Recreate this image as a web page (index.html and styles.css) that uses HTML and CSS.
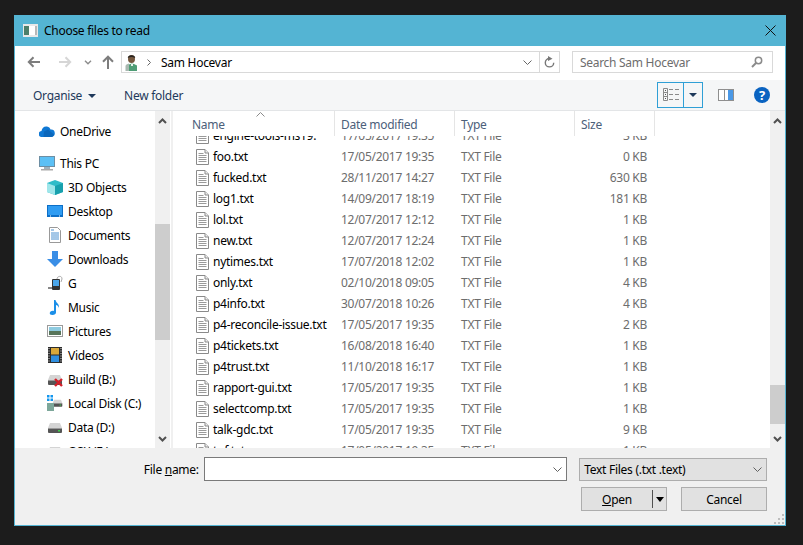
FILE: index.html
```html
<!DOCTYPE html>
<html lang="en">
<head>
<meta charset="utf-8">
<title>Choose files to read</title>
<link rel="stylesheet" href="styles.css">
</head>
<body>
<svg class="defs" width="0" height="0" aria-hidden="true">
  <defs>
    <symbol id="file" viewBox="0 0 13 16">
      <path d="M.5.500h8.500l3.500 3.500v11.500h-12z" fill="#fff" stroke="#8a8a8a"/>
      <path d="M9 .5v3.500h3.500" fill="#eee" stroke="#8a8a8a"/>
      <path d="M2.500 4.500h5M2.500 6.500h8M2.500 8.500h8M2.500 10.500h8M2.500 12.500h8" stroke="#9a9a9a"/>
    </symbol>
    <symbol id="drive" viewBox="0 0 16 16">
      <path d="M3 4h10l2 5H1z" fill="#d4d4d4"/>
      <rect x="1" y="9" width="14" height="5" rx="1" fill="#555"/>
      <rect x="1" y="9" width="14" height="1" fill="#999"/>
      <rect x="11" y="11" width="2" height="1.500" fill="#3fd04a"/>
    </symbol>
  </defs>
</svg>
<div class="window">
  <header class="titlebar">
    <svg class="title-icon" width="15" height="13" viewBox="0 0 15 13"><rect width="15" height="13" fill="#e8e8e8"/><rect x="1" y="2" width="5" height="9" fill="#4d7f6a"/><rect x="6" y="2" width="6" height="9" fill="#fff"/><rect x="12" y="2" width="2" height="9" fill="#b8b8b8"/></svg>
    <span class="title-text">Choose files to read</span>
    <svg class="close" width="11" height="11" viewBox="0 0 11 11"><path d="M.5.500l10 10M10.500.500l-10 10" stroke="#111" fill="none"/></svg>
  </header>

  <div class="navbar">
    <svg class="nav-back" width="14" height="12" viewBox="0 0 14 12"><path d="M13 6H2M6.500 1.200L1.800 6l4.700 4.800" fill="none" stroke="#7d7d7d" stroke-width="2"/></svg>
    <svg class="nav-forward" width="14" height="12" viewBox="0 0 14 12"><path d="M1 6h11M7.500 1.200L12.200 6l-4.700 4.800" fill="none" stroke="#d6d6d6" stroke-width="2"/></svg>
    <svg class="nav-recent" width="8" height="5" viewBox="0 0 8 5"><path d="M1 .8l3 3 3-3" fill="none" stroke="#8c8c8c" stroke-width="1.400"/></svg>
    <svg class="nav-up" width="12" height="14" viewBox="0 0 12 14"><path d="M6 14V2M1 6.700L6 1.700l5 5" fill="none" stroke="#7d7d7d" stroke-width="2"/></svg>
    <div class="address">
      <svg class="user-icon" width="13" height="17" viewBox="0 0 13 17"><path d="M4 17V10.500l2.500-1 2.500 .5 3 1.500V17z" fill="#4f9d76"/><path d="M.5 17v-5c0-1.200 1.500-2 3.500-2.500V17z" fill="#a8b8b0"/><rect x="6" y="10" width="2" height="2" fill="#e8f2ec"/><ellipse cx="6.500" cy="5" rx="3.500" ry="4" fill="#75583f"/><path d="M2.800 4C2.500 .4 10.500 .4 10.200 4 7.500 2.800 5.500 2.800 2.800 4z" fill="#27231f"/></svg>
      <svg class="crumb" width="4" height="7" viewBox="0 0 4 7"><path d="M.5.500l3 3-3 3" fill="none" stroke="#666"/></svg>
      <span class="address-text">Sam Hocevar</span>
      <svg class="address-chevron" width="9" height="5" viewBox="0 0 9 5"><path d="M.5.500l4 4 4-4" fill="none" stroke="#666"/></svg>
      <span class="refresh">
        <svg width="11" height="12" viewBox="0 0 11 12"><path d="M5.500 2.500a4.200 4.200 0 1 0 4.200 4.200" fill="none" stroke="#777" stroke-width="1.400"/><path d="M4 0l4.500 2.800L4 5z" fill="#777"/></svg>
      </span>
    </div>
    <div class="search">
      <span>Search Sam Hocevar</span>
      <svg width="12" height="12" viewBox="0 0 12 12"><circle cx="7.500" cy="4.500" r="3.200" fill="none" stroke="#8a8a8a" stroke-width="1.500"/><path d="M5 7l-4 4" stroke="#8a8a8a" stroke-width="2"/></svg>
    </div>
  </div>

  <div class="toolbar">
    <span class="tool organise">Organise<i class="tool-caret"></i></span>
    <span class="tool">New folder</span>
    <span class="toolbar-spacer"></span>
    <div class="view-button">
      <span class="view-main">
        <svg width="16" height="13" viewBox="0 0 16 13"><path d="M.5.500h4v12h-4zM.5 4.500h4M.5 8.500h4" fill="none" stroke="#8a8a8a"/><path d="M6 1.500h4M12 1.500h4M6 6.500h4M12 6.500h4M6 11.500h4M12 11.500h4" stroke="#8a8a8a"/><path d="M2 2h1v1H2zM2 6h1v1H2zM2 10h1v1H2z" fill="#555"/></svg>
      </span>
      <span class="view-drop"><i class="tool-caret"></i></span>
    </div>
    <svg class="pane-icon" width="16" height="12" viewBox="0 0 16 12"><rect width="16" height="12" fill="#8f8f8f"/><rect x="1" y="1" width="5" height="10" fill="#fff"/><rect x="7" y="1" width="3" height="10" fill="#fff"/><rect x="10" y="1" width="5" height="10" fill="#4a98e6"/></svg>
    <svg class="help-icon" width="16" height="16" viewBox="0 0 16 16"><circle cx="8" cy="8" r="8" fill="#0a63c1"/><text x="8" y="12.500" class="help-mark">?</text></svg>
  </div>

  <div class="content">
    <nav class="sidebar">
      <div class="side-inner">
        <div class="side-row side-root side-gap">
          <svg width="16" height="11" viewBox="0 0 16 11"><path d="M3 11a3 3 0 0 1-.5-6C3 2 5 0 8 .5c2 .3 3 1.500 3.500 3a3.700 3.700 0 0 1 1 7.500z" fill="#0f78d4"/><path d="M5 5.500l4-2 6 5-1.500 2.500h-9z" fill="#0a5fb0" opacity=".7"/></svg>
          <span>OneDrive</span>
        </div>
        <div class="side-row side-root">
          <svg width="16" height="15" viewBox="0 0 16 15"><rect x=".5" y=".5" width="15" height="10" fill="#5cc0f5" stroke="#6d8ea3"/><rect x="5" y="11" width="6" height="2" fill="#9fb2bd"/><rect x="2" y="13" width="12" height="1.500" fill="#a9a9a9"/></svg>
          <span>This PC</span>
        </div>
        <div class="side-row">
          <svg width="16" height="15" viewBox="0 0 16 15"><path d="M8 0l8 3v9l-8 3-8-3V3z" fill="#2fbcc9"/><path d="M0 3l8 3v9l-8-3z" fill="#9fe6ea"/><path d="M8 6l8-3v9l-8 3z" fill="#18a0ad"/></svg>
          <span>3D Objects</span>
        </div>
        <div class="side-row">
          <svg width="16" height="12" viewBox="0 0 16 12"><rect width="16" height="12" fill="#0d6fc7"/><rect x="1" y="1" width="14" height="9" fill="#2f9cf2"/><path d="M3 11h1M12 11h1" stroke="#fff"/></svg>
          <span>Desktop</span>
        </div>
        <div class="side-row">
          <svg width="16" height="16" viewBox="0 0 12 16"><path d="M.5.500h8l3 3v12H.5z" fill="#fff" stroke="#999"/><path d="M2 3h3M2 6h8M2 8h8M2 10h8M2 12h8" stroke="#4a90d0"/></svg>
          <span>Documents</span>
        </div>
        <div class="side-row">
          <svg width="16" height="16" viewBox="0 0 16 16"><path d="M5 0h6v8h5l-8 8-8-8h5z" fill="#3a8ee6"/></svg>
          <span>Downloads</span>
        </div>
        <div class="side-row">
          <svg width="16" height="16" viewBox="0 0 16 16"><rect x="5" y="4" width="8" height="11" rx="1" fill="#333"/><rect x="6" y="5" width="6" height="6" fill="#4aa6ea"/><path d="M10 4c0-3 5-4 5 0l-1 3" fill="none" stroke="#aaa"/><rect x="1" y="12" width="4" height="2" fill="#888"/></svg>
          <span>G</span>
        </div>
        <div class="side-row">
          <svg width="16" height="16" viewBox="0 0 16 16"><path d="M7 1h1.500c.5 3 4 3.500 3.500 8-.5-2-2-3-3-3v7.500C9 15 7.500 16 5.500 16 3.500 16 2.500 15 2.800 13.700 3.200 12 5.500 11.300 7 12z" fill="#1b8fe8"/></svg>
          <span>Music</span>
        </div>
        <div class="side-row">
          <svg width="16" height="12" viewBox="0 0 16 12"><rect x=".5" y=".5" width="15" height="11" fill="#fff" stroke="#9a9a9a"/><rect x="2" y="2" width="12" height="4" fill="#8ecbe0"/><rect x="2" y="6" width="12" height="4" fill="#58755a"/></svg>
          <span>Pictures</span>
        </div>
        <div class="side-row">
          <svg width="16" height="16" viewBox="0 0 14 16"><rect width="14" height="16" fill="#2c2c2c"/><rect x="3" y="1" width="8" height="6.500" fill="#d9a83a"/><rect x="3" y="8.500" width="8" height="6.500" fill="#2f8fe0"/><path d="M1 1v14M13 1v14" stroke="#ddd" stroke-dasharray="1 1.500"/></svg>
          <span>Videos</span>
        </div>
        <div class="side-row">
          <svg width="16" height="16" viewBox="0 0 16 16"><use href="#drive" width="16" height="16"/><path d="M8 8l7 7M15 8l-7 7" stroke="#d3202a" stroke-width="2.400"/></svg>
          <span>Build (B:)</span>
        </div>
        <div class="side-row">
          <svg width="16" height="16" viewBox="0 0 16 16"><use href="#drive" x="5" y="2" width="11" height="11"/><path d="M0 0h2.500v2.500H0zM3.500 0H6v2.500H3.500zM0 3.500h2.500V6H0zM3.500 3.500H6V6H3.500z" fill="#1296ee"/><rect y="8" width="7" height="8" fill="#7da79a"/></svg>
          <span>Local Disk (C:)</span>
        </div>
        <div class="side-row">
          <svg width="16" height="16" viewBox="0 0 16 16"><use href="#drive" width="16" height="16"/></svg>
          <span>Data (D:)</span>
        </div>
        <div class="side-row">
          <svg width="16" height="16" viewBox="0 0 16 16"><use href="#drive" width="16" height="16"/></svg>
          <span>OSX (E:)</span>
        </div>
      </div>
    </nav>
    <div class="scrollbar scrollbar-side">
      <svg class="sb-arrow" width="9" height="6" viewBox="0 0 9 6"><path d="M1 5l3.500-3.500L8 5" fill="none" stroke="#505050" stroke-width="2"/></svg>
      <div class="sb-thumb"></div>
      <svg class="sb-arrow" width="9" height="6" viewBox="0 0 9 6"><path d="M1 1l3.500 3.500L8 1" fill="none" stroke="#505050" stroke-width="2"/></svg>
    </div>
    <div class="pane-divider"></div>

    <main class="files">
      <div class="file-header">
        <span class="col-head col-name">Name<svg class="sort-arrow" width="9" height="5" viewBox="0 0 9 5"><path d="M.5 4.500l4-4 4 4" fill="none" stroke="#8a8a8a"/></svg></span>
        <span class="col-head col-wide">Date modified</span>
        <span class="col-head col-wide">Type</span>
        <span class="col-head col-size">Size</span>
      </div>
      <div class="file-body">
        <div class="file-rows">
          <div class="row"><span class="name"><svg width="13" height="16"><use href="#file" width="13" height="16"/></svg>engine-tools-ms19.</span><span>17/05/2017 19:35</span><span>TXT File</span><span class="size">3 KB</span></div>
          <div class="row"><span class="name"><svg width="13" height="16"><use href="#file" width="13" height="16"/></svg>foo.txt</span><span>17/05/2017 19:35</span><span>TXT File</span><span class="size">0 KB</span></div>
          <div class="row"><span class="name"><svg width="13" height="16"><use href="#file" width="13" height="16"/></svg>fucked.txt</span><span>28/11/2017 14:27</span><span>TXT File</span><span class="size">630 KB</span></div>
          <div class="row"><span class="name"><svg width="13" height="16"><use href="#file" width="13" height="16"/></svg>log1.txt</span><span>14/09/2017 18:19</span><span>TXT File</span><span class="size">181 KB</span></div>
          <div class="row"><span class="name"><svg width="13" height="16"><use href="#file" width="13" height="16"/></svg>lol.txt</span><span>12/07/2017 12:12</span><span>TXT File</span><span class="size">1 KB</span></div>
          <div class="row"><span class="name"><svg width="13" height="16"><use href="#file" width="13" height="16"/></svg>new.txt</span><span>12/07/2017 12:24</span><span>TXT File</span><span class="size">1 KB</span></div>
          <div class="row"><span class="name"><svg width="13" height="16"><use href="#file" width="13" height="16"/></svg>nytimes.txt</span><span>17/07/2018 12:02</span><span>TXT File</span><span class="size">1 KB</span></div>
          <div class="row"><span class="name"><svg width="13" height="16"><use href="#file" width="13" height="16"/></svg>only.txt</span><span>02/10/2018 09:05</span><span>TXT File</span><span class="size">4 KB</span></div>
          <div class="row"><span class="name"><svg width="13" height="16"><use href="#file" width="13" height="16"/></svg>p4info.txt</span><span>30/07/2018 10:26</span><span>TXT File</span><span class="size">4 KB</span></div>
          <div class="row"><span class="name"><svg width="13" height="16"><use href="#file" width="13" height="16"/></svg>p4-reconcile-issue.txt</span><span>17/05/2017 19:35</span><span>TXT File</span><span class="size">2 KB</span></div>
          <div class="row"><span class="name"><svg width="13" height="16"><use href="#file" width="13" height="16"/></svg>p4tickets.txt</span><span>16/08/2018 16:40</span><span>TXT File</span><span class="size">1 KB</span></div>
          <div class="row"><span class="name"><svg width="13" height="16"><use href="#file" width="13" height="16"/></svg>p4trust.txt</span><span>11/10/2018 16:17</span><span>TXT File</span><span class="size">1 KB</span></div>
          <div class="row"><span class="name"><svg width="13" height="16"><use href="#file" width="13" height="16"/></svg>rapport-gui.txt</span><span>17/05/2017 19:35</span><span>TXT File</span><span class="size">1 KB</span></div>
          <div class="row"><span class="name"><svg width="13" height="16"><use href="#file" width="13" height="16"/></svg>selectcomp.txt</span><span>17/05/2017 19:35</span><span>TXT File</span><span class="size">1 KB</span></div>
          <div class="row"><span class="name"><svg width="13" height="16"><use href="#file" width="13" height="16"/></svg>talk-gdc.txt</span><span>17/05/2017 19:35</span><span>TXT File</span><span class="size">9 KB</span></div>
          <div class="row"><span class="name"><svg width="13" height="16"><use href="#file" width="13" height="16"/></svg>tgf.txt</span><span>17/05/2017 19:35</span><span>TXT File</span><span class="size">1 KB</span></div>
        </div>
      </div>
    </main>
    <div class="scrollbar scrollbar-files">
      <svg class="sb-arrow" width="9" height="6" viewBox="0 0 9 6"><path d="M1 5l3.500-3.500L8 5" fill="none" stroke="#505050" stroke-width="2"/></svg>
      <div class="sb-thumb"></div>
      <svg class="sb-arrow" width="9" height="6" viewBox="0 0 9 6"><path d="M1 1l3.500 3.500L8 1" fill="none" stroke="#505050" stroke-width="2"/></svg>
    </div>
  </div>

  <footer class="footer">
    <div class="footer-row">
      <label class="file-label">File <u>n</u>ame:</label>
      <div class="name-input">
        <svg width="9" height="5" viewBox="0 0 9 5"><path d="M.5.500l4 4 4-4" fill="none" stroke="#606060"/></svg>
      </div>
      <div class="filter">
        <span>Text Files (.txt .text)</span>
        <svg width="9" height="5" viewBox="0 0 9 5"><path d="M.5.500l4 4 4-4" fill="none" stroke="#606060"/></svg>
      </div>
    </div>
    <div class="button-row">
      <div class="btn btn-open"><span class="btn-open-label"><u>O</u>pen</span><span class="btn-split"><i class="split-caret"></i></span></div>
      <div class="btn btn-cancel">Cancel</div>
    </div>
    <svg class="grip" width="11" height="11" viewBox="0 0 11 11"><path d="M8 0h2v2H8zM4 4h2v2H4zM8 4h2v2H8zM0 8h2v2H0zM4 8h2v2H4zM8 8h2v2H8z" fill="#bdbdbd"/></svg>
  </footer>
</div>
</body>
</html>
```
FILE: styles.css
```css
* { box-sizing: border-box; }
html, body { margin: 0; height: 100%; }
body {
  background: #1c1c1c;
  padding: 15px 17px 19px 14px;
  font-family: "Noto Sans", "Open Sans", sans-serif;
  font-size: 12px;
  letter-spacing: -0.28px;
  color: #000;
  overflow: hidden;
}
.defs { position: absolute; }
svg { display: block; flex: none; }
.window {
  width: 772px;
  height: 511px;
  border: 1px solid #54b4d3;
  border-top: 0;
  display: flex;
  flex-direction: column;
  background: #fff;
}
.titlebar {
  height: 31px;
  margin: 0 -1px;
  background: #54b4d3;
  display: flex;
  align-items: center;
  padding: 0 10px 0 9px;
}
.title-icon { margin-right: 6px; }
.title-text { flex: 1; }
.navbar {
  height: 35px;
  display: flex;
  align-items: center;
  background: #fff;
  padding: 0 12px 1px 11px;
}
.nav-back { margin-left: 1px; }
.nav-forward { margin-left: 17px; }
.nav-recent { margin-left: 12px; }
.nav-up { margin-left: 10px; }
.address {
  margin-left: 7px;
  width: 441px;
  height: 22px;
  border: 1px solid #d9d9d9;
  display: flex;
  align-items: center;
  padding-left: 3px;
}
.crumb { margin-left: 9px; }
.address-text { margin-left: 10px; flex: 1; }
.address-chevron { margin-right: 7px; }
.refresh {
  width: 20px;
  height: 20px;
  border-left: 1px solid #d9d9d9;
  display: flex;
  align-items: center;
  justify-content: center;
}
.search {
  margin-left: 12px;
  width: 202px;
  height: 22px;
  border: 1px solid #d9d9d9;
  display: flex;
  align-items: center;
  justify-content: space-between;
  padding: 0 9px 0 7px;
  color: #6d6d6d;
}
.toolbar {
  height: 31px;
  background: #f5f6f7;
  border-bottom: 1px solid #e3e5e7;
  display: flex;
  align-items: center;
  padding: 0 15px 1px 18px;
  color: #1e395b;
}
.tool { padding-top: 2px; }
.organise { display: flex; align-items: center; margin-right: 28px; }
.tool-caret {
  display: block;
  width: 0;
  height: 0;
  border: 4px solid transparent;
  border-top: 4px solid #1e395b;
  border-bottom: 0;
}
.organise .tool-caret { margin-left: 6px; }
.toolbar-spacer { flex: 1; }
.view-button {
  width: 46px;
  height: 26px;
  border: 1px solid #2f9fd6;
  display: flex;
  margin-right: 15px;
}
.view-main {
  width: 26px;
  border-right: 1px solid #2f9fd6;
  display: flex;
  align-items: center;
  justify-content: center;
}
.view-drop {
  flex: 1;
  display: flex;
  align-items: center;
  justify-content: center;
}
.pane-icon { margin-right: 20px; }
.help-mark {
  fill: #fff;
  font-size: 13px;
  font-weight: 700;
  text-anchor: middle;
}
.content {
  height: 337px;
  display: flex;
  background: #fff;
}
.sidebar {
  width: 140px;
  overflow: hidden;
  flex: none;
}
.side-inner { padding-top: 8px; }
.side-row {
  height: 24px;
  display: flex;
  align-items: center;
  padding-left: 32px;
}
.side-row svg { margin-right: 5px; }
.side-root { padding-left: 24px; }
.side-gap { margin-bottom: 8px; }
.scrollbar {
  width: 15px;
  flex: none;
  background: #f0f0f0;
  display: flex;
  flex-direction: column;
  align-items: center;
  justify-content: space-between;
  position: relative;
  padding: 7px 0 6px;
}
.sb-thumb {
  position: absolute;
  left: 0;
  width: 15px;
  background: #cdcdcd;
}
.scrollbar-side .sb-thumb { top: 113px; height: 116px; }
.scrollbar-files .sb-thumb { top: 274px; height: 39px; }
.pane-divider {
  width: 3px;
  flex: none;
  border-left: 1px solid #fff;
  background: #f0f0f0;
}
.files {
  flex: 1;
  min-width: 0;
  display: flex;
  flex-direction: column;
}
.file-header {
  height: 25px;
  display: flex;
  flex: none;
  color: #4c607a;
  line-height: 28px;
}
.col-head {
  border-right: 1px solid #e5e5e5;
  padding-left: 6px;
  position: relative;
}
.col-name { width: 162px; padding-left: 19px; }
.col-wide { width: 120px; }
.col-size { width: 80px; }
.sort-arrow { position: absolute; left: 83px; top: 1px; }
.file-body { flex: 1; overflow: hidden; min-height: 0; }
.file-rows { margin-top: -11px; }
.row {
  height: 21px;
  display: grid;
  grid-template-columns: 145px 120px 120px 66px;
  align-items: center;
  padding-left: 23px;
  color: #6d6d6d;
}
.name { display: flex; align-items: center; gap: 4px; color: #000; white-space: nowrap; }
.size { text-align: right; }
.footer {
  height: 77px;
  flex: none;
  background: #f0f0f0;
  position: relative;
  padding: 9px 18px 0 0;
}
.footer-row { display: flex; align-items: center; }
.file-label { width: 184px; text-align: right; }
.name-input {
  margin-left: 5px;
  width: 364px;
  height: 24px;
  border: 1px solid #7a7a7a;
  background: #fff;
  display: flex;
  align-items: center;
  justify-content: flex-end;
  padding-right: 4px;
}
.filter {
  margin-left: 12px;
  width: 188px;
  height: 23px;
  border: 1px solid #adadad;
  background: #e1e1e1;
  display: flex;
  align-items: center;
  justify-content: space-between;
  padding: 0 4px;
}
.button-row { display: flex; justify-content: flex-end; gap: 14px; margin-top: 6px; }
.btn {
  width: 86px;
  height: 24px;
  border: 1px solid #adadad;
  background: #e1e1e1;
  display: flex;
  align-items: center;
  justify-content: center;
}
.btn-open { justify-content: flex-start; }
.btn-open-label { width: 70px; text-align: center; }
.btn-split {
  width: 14px;
  height: 18px;
  border-left: 1px solid #505050;
  display: flex;
  align-items: center;
  justify-content: center;
}
.split-caret {
  display: block;
  width: 0;
  height: 0;
  border: 4px solid transparent;
  border-top: 5px solid #000;
  border-bottom: 0;
}
.grip { position: absolute; right: 0; bottom: 0; }
```
